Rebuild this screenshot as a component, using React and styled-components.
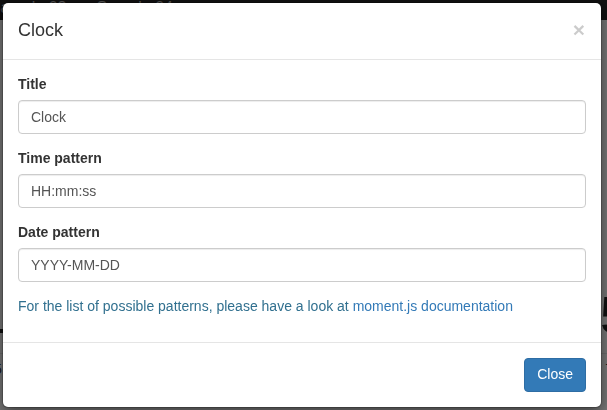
import React from 'react';
import styled, { createGlobalStyle } from 'styled-components';

const GlobalStyle = createGlobalStyle`
  html, body {
    margin: 0;
    padding: 0;
    height: 100%;
    overflow: hidden;
  }
  body {
    font-family: "Liberation Sans", Arial, Helvetica, sans-serif;
    font-size: 14px;
    line-height: 1.42857;
    color: #333;
    background: #fff;
  }
  * {
    box-sizing: border-box;
  }
`;

// page behind the modal

const Page = styled.div`
  width: 607px;
  height: 410px;
  display: flex;
  flex-direction: column;
  background: #f4f4f4;
`;

const NavBar = styled.div`
  height: 20px;
  background: #222;
  display: flex;
  align-items: flex-end;
  gap: 30px;
  overflow: hidden;
`;

const NavTab = styled.span`
  color: #b0b0b0;
  font-size: 16px;
  line-height: 16px;
  margin-bottom: 4px;
  margin-left: ${(p) => p.$offset || 0}px;
`;

const Dashboard = styled.div`
  flex: 1;
  display: flex;
  flex-direction: column;
  justify-content: flex-end;
  padding-bottom: 30px;
  overflow: hidden;
`;

const BigClock = styled.div`
  font-size: 52px;
  line-height: 60px;
  color: #222;
  white-space: nowrap;
  display: flex;
  justify-content: space-between;
  margin: 0 -22px;
`;

const Divider = styled.div`
  height: 1px;
  background: #ddd;
  margin: 8px 0 6px;
`;

const SmallRow = styled.div`
  display: flex;
  justify-content: space-between;
  font-size: 14px;
  color: #333;
  margin: 0 -6px;
`;

// modal

const Backdrop = styled.div`
  position: fixed;
  inset: 0;
  background: rgba(0, 0, 0, 0.5);
  padding: 2px 5px 2px 2px;
  display: flex;
  align-items: flex-start;
`;

const ModalContent = styled.div`
  width: 600px;
  background: #fff;
  border: 1px solid rgba(0, 0, 0, 0.2);
  border-radius: 6px;
  box-shadow: 0 5px 15px rgba(0, 0, 0, 0.5);
  background-clip: padding-box;
`;

const ModalHeader = styled.div`
  padding: 15px;
  border-bottom: 1px solid #e5e5e5;
  display: flex;
  align-items: center;
  justify-content: space-between;
`;

const ModalTitle = styled.h4`
  margin: 0;
  font-size: 18px;
  font-weight: 500;
  line-height: 1.42857;
  color: #333;
`;

const CloseX = styled.button`
  border: 0;
  background: transparent;
  padding: 0;
  font-size: 21px;
  font-weight: 700;
  line-height: 1;
  color: #000;
  opacity: 0.2;
  font-family: "Liberation Sans", Arial, sans-serif;
  margin-top: -2px;
  margin-right: 1px;
  cursor: pointer;
`;

const ModalBody = styled.div`
  padding: 15px;
`;

const FormGroup = styled.div`
  margin-bottom: 15px;
`;

const Label = styled.label`
  display: block;
  font-weight: 700;
  margin-bottom: 5px;
  color: #333;
`;

const Input = styled.input`
  display: block;
  width: 100%;
  height: 34px;
  padding: 6px 12px;
  font-family: inherit;
  font-size: 14px;
  line-height: 1.42857;
  color: #555;
  background: #fff;
  border: 1px solid #ccc;
  border-radius: 4px;
  box-shadow: inset 0 1px 1px rgba(0, 0, 0, 0.075);
  outline: none;
`;

const HelpText = styled.p`
  margin: 0 0 10px;
  color: #31708f;
`;

const DocLink = styled.a`
  color: #337ab7;
  text-decoration: none;
`;

const ModalFooter = styled.div`
  padding: 15px;
  border-top: 1px solid #e5e5e5;
  display: flex;
  justify-content: flex-end;
`;

const PrimaryButton = styled.button`
  height: 34px;
  padding: 6px 12px;
  font-family: inherit;
  font-size: 14px;
  line-height: 1.42857;
  color: #fff;
  background: #337ab7;
  border: 1px solid #2e6da4;
  border-radius: 4px;
  cursor: pointer;
`;

const fields = [
  { label: 'Title', value: 'Clock' },
  { label: 'Time pattern', value: 'HH:mm:ss' },
  { label: 'Date pattern', value: 'YYYY-MM-DD' },
];

const App = () => {
  return (
    <>
      <GlobalStyle />
      <Page>
        <NavBar>
          <NavTab $offset={-10}>Sample 03</NavTab>
          <NavTab>Sample 04</NavTab>
        </NavBar>
        <Dashboard>
          <BigClock>
            <span>10:35</span>
            <span>12:45</span>
          </BigClock>
          <Divider />
          <SmallRow>
            <span>5</span>
            <span>7</span>
          </SmallRow>
        </Dashboard>
      </Page>
      <Backdrop>
        <ModalContent>
          <ModalHeader>
            <ModalTitle>Clock</ModalTitle>
            <CloseX aria-label='Close'>×</CloseX>
          </ModalHeader>
          <ModalBody>
            {fields.map((f) => (
              <FormGroup key={f.label}>
                <Label>{f.label}</Label>
                <Input defaultValue={f.value} />
              </FormGroup>
            ))}
            <HelpText>
              For the list of possible patterns, please have a look at{' '}
              <DocLink href='#'>moment.js documentation</DocLink>
            </HelpText>
          </ModalBody>
          <ModalFooter>
            <PrimaryButton>Close</PrimaryButton>
          </ModalFooter>
        </ModalContent>
      </Backdrop>
    </>
  );
};

export default App;
